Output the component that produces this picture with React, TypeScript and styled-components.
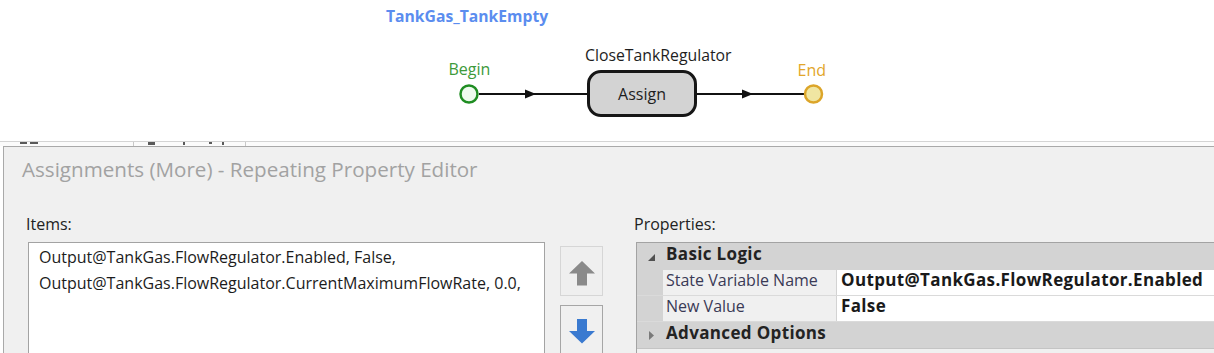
import React from "react";
import styled, { createGlobalStyle } from "styled-components";

const Global = createGlobalStyle`
  html, body { margin: 0; padding: 0; background: #ffffff; overflow: hidden; }
  body { font-family: "Open Sans", "Noto Sans", sans-serif; }
`;

const Page = styled.div`
  width: 1214px;
  height: 353px;
  display: flex;
  flex-direction: column;
  overflow: hidden;
  background: #ffffff;
`;

/* ---------- diagram canvas ---------- */
const Canvas = styled.div`
  position: relative;
  height: 141px;
  flex: none;
`;

const Wires = styled.svg`
  position: absolute;
  left: 0;
  top: 0;
`;

const CanvasLabel = styled.div<{ $x: number; $y: number; $color: string; $size: number; $bold?: boolean }>`
  position: absolute;
  left: ${(p) => p.$x}px;
  top: ${(p) => p.$y}px;
  color: ${(p) => p.$color};
  font-size: ${(p) => p.$size}px;
  font-weight: ${(p) => (p.$bold ? 700 : 400)};
  line-height: 1;
  white-space: nowrap;
`;

const StepNode = styled.div`
  position: absolute;
  left: 587px;
  top: 70px;
  width: 110px;
  height: 47px;
  box-sizing: border-box;
  border: 3px solid #161616;
  border-radius: 14px;
  background: #d3d3d3;
  display: flex;
  align-items: center;
  justify-content: center;
  font-size: 16px;
  color: #1e1e1e;
`;

/* ---------- background window strip (mostly hidden) ---------- */
const BackStrip = styled.div`
  height: 4px;
  flex: none;
  border-top: 1px solid #d4d4d4;
  display: flex;
  overflow: hidden;
  background: #fbfbfb;
`;

const StripCell = styled.div<{ $w: number }>`
  width: ${(p) => p.$w}px;
  flex: none;
  box-sizing: border-box;
  border-right: 1px solid #c8c8c8;
  display: flex;
  align-items: flex-start;
`;

const StripMark = styled.span<{ $ml: number; $w: number; $h: number }>`
  display: block;
  margin-left: ${(p) => p.$ml}px;
  width: ${(p) => p.$w}px;
  height: ${(p) => p.$h}px;
  background: #5a5a5a;
`;

/* ---------- dialog ---------- */
const Dialog = styled.div`
  flex: 1;
  margin-left: 3px;
  border-top: 1px solid #a9a9a9;
  border-left: 1px solid #a9a9a9;
  background: #f0f0f0;
  display: flex;
  flex-direction: column;
  overflow: hidden;
  min-height: 0;
`;

const DialogTitle = styled.div`
  padding: 8px 0 0 18px;
  font-size: 20.6px;
  line-height: 28px;
  color: #a2a2a2;
  white-space: nowrap;
`;

const Body = styled.div`
  margin-top: 31px;
  padding-left: 24px;
  display: flex;
  align-items: flex-start;
`;

const Column = styled.div<{ $w?: number }>`
  ${(p) => (p.$w ? `width: ${p.$w}px; flex: none;` : "flex: 1; min-width: 0;")}
  display: flex;
  flex-direction: column;
`;

const FieldLabel = styled.div`
  margin-left: -2px;
  font-size: 16px;
  line-height: 20px;
  color: #222222;
  margin-bottom: 8px;
`;

const ItemList = styled.div`
  height: 200px;
  box-sizing: border-box;
  border: 1px solid #a3a3a3;
  background: #ffffff;
  padding: 1px 0 0 10px;
`;

const ItemRow = styled.div`
  font-size: 16px;
  line-height: 26px;
  color: #1c1c1c;
  white-space: nowrap;
`;

const ButtonColumn = styled.div`
  width: 43px;
  flex: none;
  margin-left: 15px;
  margin-right: 33px;
  padding-top: 32px;
  display: flex;
  flex-direction: column;
  gap: 9px;
`;

const MoveButton = styled.div<{ $enabled: boolean; $h: number }>`
  height: ${(p) => p.$h}px;
  box-sizing: border-box;
  border: 1px solid ${(p) => (p.$enabled ? "#a6a6a6" : "#d6d6d6")};
  background: ${(p) => (p.$enabled ? "#f0f0f0" : "#efefef")};
  display: flex;
  justify-content: center;
  align-items: flex-start;
  padding-top: ${(p) => (p.$enabled ? 13 : 14)}px;
`;

/* ---------- property grid ---------- */
const Grid = styled.div`
  height: 200px;
  border-top: 1px solid #a3a3a3;
  border-left: 1px solid #a3a3a3;
  background: #f0f0f0;
  display: flex;
  flex-direction: column;
`;

const CategoryRow = styled.div<{ $h: number }>`
  height: ${(p) => p.$h}px;
  flex: none;
  background: #d3d3d3;
  display: flex;
`;

const Margin = styled.div<{ $open: boolean }>`
  width: 26px;
  flex: none;
  box-sizing: border-box;
  display: flex;
  align-items: flex-start;
  padding: ${(p) => (p.$open ? "11px 0 0 11px" : "9px 0 0 12px")};
  background: #d3d3d3;
`;

const CategoryName = styled.div`
  padding: 1px 0 0 3px;
  font-size: 17px;
  letter-spacing: 0.35px;
  line-height: 20px;
  font-weight: 700;
  color: #232323;
  white-space: nowrap;
`;

const PropRow = styled.div`
  height: 26px;
  flex: none;
  display: flex;
  box-sizing: border-box;
  border-bottom: 1px solid #dadada;
  background: #d3d3d3;
`;

const PropName = styled.div`
  width: 174px;
  flex: none;
  box-sizing: border-box;
  border-right: 1px solid #d3d3d3;
  background: #f0f0f0;
  padding: 1px 0 0 3px;
  font-size: 16px;
  line-height: 18px;
  color: #3a3a56;
  white-space: nowrap;
`;

const PropValue = styled.div`
  flex: 1;
  background: #ffffff;
  padding: 1px 0 0 4px;
  font-size: 17px;
  letter-spacing: 0.35px;
  line-height: 18px;
  font-weight: 700;
  color: #1a1a1a;
  white-space: nowrap;
`;

const GridFiller = styled.div`
  flex: 1;
  border-top: 1px solid #c4c4c4;
  background: #f0f0f0;
`;

const Arrow = ({ dir, color }: { dir: "up" | "down"; color: string }) => (
  <svg width="26" height="25" viewBox="0 0 26 25">
    <path
      d={
        dir === "up"
          ? "M13 0 L26 12.5 L18 12.5 L18 24.5 L8 24.5 L8 12.5 L0 12.5 Z"
          : "M8 0 L18 0 L18 12 L26 12 L13 24.5 L0 12 L8 12 Z"
      }
      fill={color}
    />
  </svg>
);

const Expander = ({ open }: { open: boolean }) =>
  open ? (
    <svg width="7" height="7" viewBox="0 0 7 7">
      <polygon points="7,0 7,7 0,7" fill="#505050" />
    </svg>
  ) : (
    <svg width="5" height="9" viewBox="0 0 5 9">
      <polygon points="0,0 5,4.5 0,9" fill="#7a7a7a" />
    </svg>
  );

export default function App() {
  return (
    <Page>
      <Global />
      <Canvas>
        <Wires width="1214" height="141" viewBox="0 0 1214 141">
          <line x1="479" y1="94" x2="588" y2="94" stroke="#111" strokeWidth="2.2" />
          <polygon points="525,89.5 536,94 525,98.5" fill="#111" />
          <line x1="696" y1="94" x2="804" y2="94" stroke="#111" strokeWidth="2.2" />
          <polygon points="742,89.5 753,94 742,98.5" fill="#111" />
          <circle cx="469" cy="94" r="8.5" fill="#eefbee" stroke="#1f8d22" strokeWidth="2.5" />
          <circle cx="813.5" cy="94" r="8.5" fill="#f0e6a2" stroke="#dca529" strokeWidth="2.5" />
        </Wires>
        <CanvasLabel $x={386} $y={9} $color="#5b8def" $size={15.7} $bold>
          TankGas_TankEmpty
        </CanvasLabel>
        <CanvasLabel $x={448.5} $y={61} $color="#3d9a3a" $size={16}>
          Begin
        </CanvasLabel>
        <CanvasLabel $x={585} $y={48} $color="#1e1e1e" $size={15.8}>
          CloseTankRegulator
        </CanvasLabel>
        <CanvasLabel $x={797.5} $y={61.5} $color="#e2a62a" $size={16}>
          End
        </CanvasLabel>
        <StepNode>Assign</StepNode>
      </Canvas>

      <BackStrip>
        <StripCell $w={134}>
          <StripMark $ml={20} $w={7} $h={2} />
          <StripMark $ml={3} $w={8} $h={2} />
        </StripCell>
        <StripCell $w={112}>
          <StripMark $ml={14} $w={7} $h={3} />
          <StripMark $ml={28} $w={2} $h={3} />
          <StripMark $ml={24} $w={3} $h={2} />
          <StripMark $ml={10} $w={2} $h={3} />
        </StripCell>
      </BackStrip>

      <Dialog>
        <DialogTitle>Assignments (More) - Repeating Property Editor</DialogTitle>
        <Body>
          <Column $w={517}>
            <FieldLabel>Items:</FieldLabel>
            <ItemList>
              <ItemRow>Output@TankGas.FlowRegulator.Enabled, False,</ItemRow>
              <ItemRow>Output@TankGas.FlowRegulator.CurrentMaximumFlowRate, 0.0,</ItemRow>
            </ItemList>
          </Column>

          <ButtonColumn>
            <MoveButton $enabled={false} $h={50}>
              <Arrow dir="up" color="#8a8a8a" />
            </MoveButton>
            <MoveButton $enabled $h={60}>
              <Arrow dir="down" color="#3a7ad0" />
            </MoveButton>
          </ButtonColumn>

          <Column>
            <FieldLabel>Properties:</FieldLabel>
            <Grid>
              <CategoryRow $h={27}>
                <Margin $open>
                  <Expander open />
                </Margin>
                <CategoryName>Basic Logic</CategoryName>
              </CategoryRow>
              <PropRow>
                <Margin $open />
                <PropName>State Variable Name</PropName>
                <PropValue>Output@TankGas.FlowRegulator.Enabled</PropValue>
              </PropRow>
              <PropRow>
                <Margin $open />
                <PropName>New Value</PropName>
                <PropValue>False</PropValue>
              </PropRow>
              <CategoryRow $h={26}>
                <Margin $open={false}>
                  <Expander open={false} />
                </Margin>
                <CategoryName>Advanced Options</CategoryName>
              </CategoryRow>
              <GridFiller />
            </Grid>
          </Column>
        </Body>
      </Dialog>
    </Page>
  );
}
